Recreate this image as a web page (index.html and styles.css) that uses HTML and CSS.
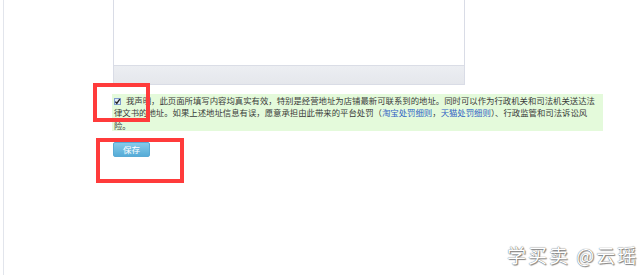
FILE: index.html
```html
<!DOCTYPE html>
<html lang="zh-CN">
<head>
<meta charset="utf-8">
<title>地址声明</title>
<link rel="stylesheet" href="styles.css">
</head>
<body>
<div class="page">
  <div class="editor">
    <div class="editor-body"></div>
    <div class="editor-bar"></div>
  </div>
  <div class="notice">
    <span class="check"><svg viewBox="0 0 7 7" width="7" height="7"><path d="M1.3 3.6 L2.8 5.3 L5.8 1.2" fill="none" stroke="#222" stroke-width="1.4"/></svg></span>我声明，此页面所填写内容均真实有效，特别是经营地址为店铺最新可联系到的地址。同时可以作为行政机关和司法机关送达法律文书的地址。如果上述地址信息有误，愿意承担由此带来的平台处罚（<a class="link">淘宝处罚细则</a>，<a class="link">天猫处罚细则</a>）、行政监管和司法诉讼风险。
  </div>
  <button class="save">保存</button>
</div>
<div class="mark mark-check"></div>
<div class="mark mark-save"></div>
<div class="watermark">学买卖 @云瑶</div>
</body>
</html>
```
FILE: styles.css
```css
html, body {
  margin: 0;
  padding: 0;
  background: #fff;
}
body {
  position: relative;
  width: 640px;
  height: 275px;
  overflow: hidden;
  font-family: "Noto Sans CJK SC", "Liberation Sans", sans-serif;
}
.page {
  height: 275px;
  margin-left: 3px;
  border-left: 1px solid #e2e5ec;
  padding-left: 109px;
  box-sizing: border-box;
}
.editor {
  width: 352px;
  height: 85px;
  box-sizing: border-box;
  border: 1px solid #d9dce6;
  border-top: 0;
  display: flex;
  flex-direction: column;
}
.editor-body {
  height: 65px;
  background: #fff;
  border-bottom: 1px solid #dadde6;
}
.editor-bar {
  flex: 1;
  background: linear-gradient(#eceef2, #e5e7ec);
}
.notice {
  margin-top: 9px;
  margin-left: -1px;
  width: 491px;
  box-sizing: border-box;
  padding: 0 8px 0 2px;
  background: #e4fadb;
  color: #3a3a3a;
  font-size: 8.4px;
  line-height: 12.4px;
}
.check {
  display: inline-block;
  width: 7px;
  height: 7px;
  box-sizing: border-box;
  margin-right: 5px;
  vertical-align: -1px;
  border: 1px solid #7d9bd0;
  background: #e2ecf9;
  position: relative;
}
.check svg {
  position: absolute;
  left: -1px;
  top: -1px;
}
.link {
  color: #2f62c4;
}
.save {
  display: block;
  margin-top: 11px;
  width: 37px;
  height: 15px;
  padding: 0;
  border: 1px solid #5aaad4;
  border-radius: 2px;
  background: linear-gradient(#86cbea, #56acd7);
  color: #fff;
  font-family: "Noto Sans CJK SC", sans-serif;
  font-size: 8.5px;
  line-height: 13px;
  text-align: center;
}
.mark {
  position: absolute;
  box-sizing: border-box;
  border: 4px solid #ff3b3b;
}
.mark-check {
  left: 93px;
  top: 83px;
  width: 57px;
  height: 39px;
}
.mark-save {
  left: 96px;
  top: 138px;
  width: 88px;
  height: 45px;
}
.watermark {
  position: absolute;
  left: 507px;
  top: 245px;
  font-size: 19px;
  line-height: 19px;
  letter-spacing: 2px;
  color: #fff;
  text-shadow: 0 0 1px #444, 1px 1px 1px #888;
  white-space: nowrap;
}
```
